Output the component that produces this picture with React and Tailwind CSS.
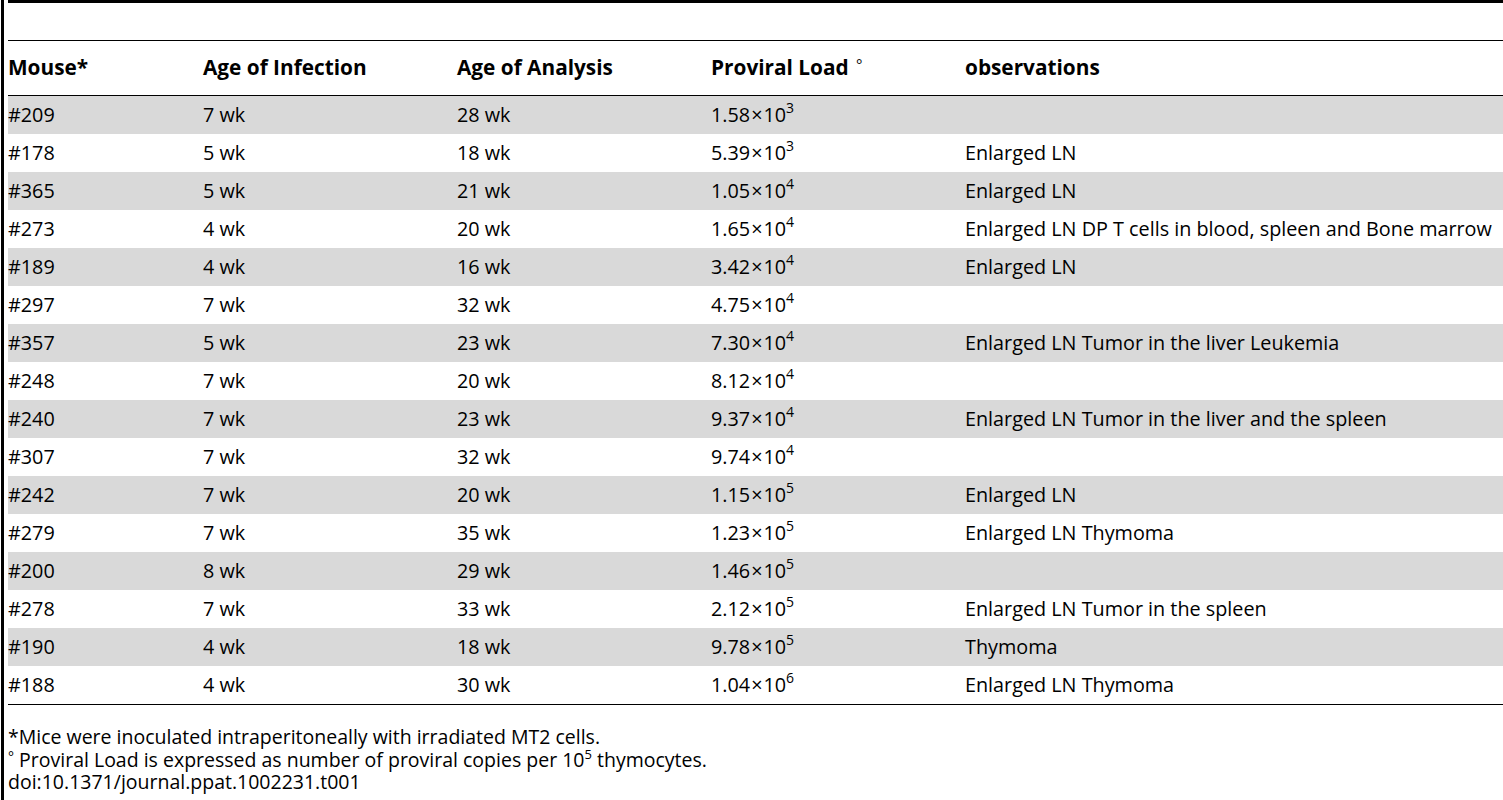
const ROWS = [
  ['#209', '7 wk', '28 wk', '1.58', '3', ''],
  ['#178', '5 wk', '18 wk', '5.39', '3', 'Enlarged LN'],
  ['#365', '5 wk', '21 wk', '1.05', '4', 'Enlarged LN'],
  ['#273', '4 wk', '20 wk', '1.65', '4', 'Enlarged LN DP T cells in blood, spleen and Bone marrow'],
  ['#189', '4 wk', '16 wk', '3.42', '4', 'Enlarged LN'],
  ['#297', '7 wk', '32 wk', '4.75', '4', ''],
  ['#357', '5 wk', '23 wk', '7.30', '4', 'Enlarged LN Tumor in the liver Leukemia'],
  ['#248', '7 wk', '20 wk', '8.12', '4', ''],
  ['#240', '7 wk', '23 wk', '9.37', '4', 'Enlarged LN Tumor in the liver and the spleen'],
  ['#307', '7 wk', '32 wk', '9.74', '4', ''],
  ['#242', '7 wk', '20 wk', '1.15', '5', 'Enlarged LN'],
  ['#279', '7 wk', '35 wk', '1.23', '5', 'Enlarged LN Thymoma'],
  ['#200', '8 wk', '29 wk', '1.46', '5', ''],
  ['#278', '7 wk', '33 wk', '2.12', '5', 'Enlarged LN Tumor in the spleen'],
  ['#190', '4 wk', '18 wk', '9.78', '5', 'Thymoma'],
  ['#188', '4 wk', '30 wk', '1.04', '6', 'Enlarged LN Thymoma'],
];

const COLS = 'grid grid-cols-[195px_254px_254px_254px_1fr]';

export default function App() {
  return (
    <div className="h-[800px] w-[1503px] overflow-hidden bg-white font-['Open_Sans',sans-serif] text-[19.8px] text-black">
      <div className="ml-px h-full border-l-[3px] border-black pl-[4px]">
        <div className="h-[3px] bg-black" />
        <div className="h-[37px]" />
        <div className="border-t-[1.5px] border-black" />
        {/* header */}
        <div className={`${COLS} h-[54px] items-center text-[20.8px] font-bold`}>
          <div>Mouse*</div>
          <div>Age of Infection</div>
          <div>Age of Analysis</div>
          <div>
            Proviral Load <span className="relative -top-[5px] ml-[2px] text-[15px] font-normal">°</span>
          </div>
          <div>observations</div>
        </div>
        <div className="border-t-[1.5px] border-black" />
        {/* body */}
        {ROWS.map((r, i) => (
          <div
            key={r[0]}
            className={`${COLS} h-[38px] items-center ${i % 2 === 0 ? 'bg-[#d9d9d9]' : 'bg-white'}`}
          >
            <div>{r[0]}</div>
            <div>{r[1]}</div>
            <div>{r[2]}</div>
            <div className="whitespace-nowrap">
              {r[3]}
              <span className="px-px">×</span>
              10
              <span className="relative -top-[9px] text-[14px] leading-none">{r[4]}</span>
            </div>
            <div className="whitespace-nowrap">{r[5]}</div>
          </div>
        ))}
        <div className="border-t-[1.5px] border-black" />
        {/* notes */}
        <div className="pt-[21px] text-[19.5px] leading-[22.5px]">
          <div>*Mice were inoculated intraperitoneally with irradiated MT2 cells.</div>
          <div>
            <span className="relative -top-[5px] text-[14px] leading-none">°</span> Proviral Load is expressed as number of proviral copies per 10
            <span className="relative -top-[8px] text-[13px] leading-none">5</span> thymocytes.
          </div>
          <div>doi:10.1371/journal.ppat.1002231.t001</div>
        </div>
      </div>
    </div>
  );
}
